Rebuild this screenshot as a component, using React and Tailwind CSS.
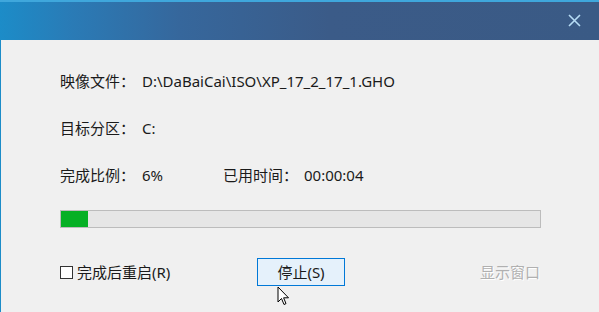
export default function App() {
  return (
    <div className="w-[599px] h-[312px] overflow-hidden bg-[#f0f0f0] flex flex-col" style={{ fontFamily: '"Noto Sans", "Noto Sans CJK SC", sans-serif' }}>
      <div className="h-[40px] shrink-0 relative bg-[linear-gradient(90deg,#1c8cc8_0%,#2a7bb6_12%,#36679c_30%,#3b5b88_55%,#3a5a85_100%)] border-t-2 border-[#3fa7dc] flex items-center justify-end pr-[18px]">
        <svg width="13" height="13" viewBox="0 0 13 13" className="mt-[-2px]">
          <path d="M1 1 L12 12 M12 1 L1 12" stroke="#b6dcf5" strokeWidth="1.6" />
        </svg>
      </div>
      <div className="flex-1 relative border-l border-[#1c8cc8] pl-[59px] pr-[59px] text-[15px] text-[#1a1a1a]">
        <div className="h-[20px] mt-[31px] flex items-center">
          <span className="w-[82px]">映像文件：</span>
          <span>D:\DaBaiCai\ISO\XP_17_2_17_1.GHO</span>
        </div>
        <div className="h-[20px] mt-[27px] flex items-center">
          <span className="w-[82px]">目标分区：</span>
          <span>C:</span>
        </div>
        <div className="h-[20px] mt-[27px] flex items-center">
          <span className="w-[82px]">完成比例：</span>
          <span className="w-[81px]">6%</span>
          <span className="w-[81px]">已用时间：</span>
          <span>00:00:04</span>
        </div>
        <div className="mt-[25px] h-[18px] w-[481px] border border-[#bcbcbc] bg-[#e6e6e6]">
          <div className="h-full w-[27px] bg-[#06b025]" />
        </div>
        <div className="mt-[30px] flex items-center">
          <div className="w-[197px] flex items-center">
            <span className="w-[13px] h-[13px] border border-[#333] bg-white mr-[4px]" />
            <span>完成后重启(R)</span>
          </div>
          <button className="w-[88px] h-[28px] border border-[#0078d7] bg-[#e5f1fb] text-[15px] text-[#1a1a1a]">停止(S)</button>
          <div className="flex-1 flex justify-end">
            <span className="text-[#b0b0b0]" style={{ textShadow: '1px 1px 0 #ffffff' }}>显示窗口</span>
          </div>
        </div>
        <svg className="absolute left-[276px] top-[246px]" width="13" height="20" viewBox="0 0 13 20">
          <path d="M1 1 L1 16 L4.5 12.5 L7 18.5 L9 17.6 L6.6 11.8 L11.5 11.8 Z" fill="#ffffff" stroke="#000" strokeWidth="1" strokeLinejoin="round" />
        </svg>
      </div>
    </div>
  );
}
